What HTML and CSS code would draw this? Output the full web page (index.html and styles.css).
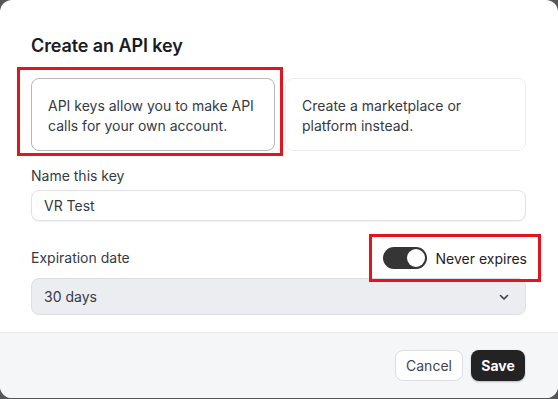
FILE: index.html
```html
<!DOCTYPE html>
<html lang="en">
<head>
    <meta charset="UTF-8">
    <meta name="viewport" content="width=device-width, initial-scale=1.0">
    <title>Create an API key</title>
    <link rel="stylesheet" href="styles.css">
</head>
<body>
    <div class="dialog">
        <div class="dialog-body">
            <h1>Create an API key</h1>

            <div class="key-types">
                <div class="key-type selected">
                    <p>API keys allow you to make API calls for your own account.</p>
                    <span class="mark mark-card"></span>
                </div>
                <div class="key-type">
                    <p>Create a marketplace or platform instead.</p>
                </div>
            </div>

            <label class="field-label" for="key-name">Name this key</label>
            <input class="text-input" type="text" id="key-name" value="VR Test">

            <div class="expiry-row">
                <span class="field-label">Expiration date</span>
                <div class="toggle-wrap">
                    <span class="toggle"><span class="knob"></span></span>
                    <span class="toggle-label">Never expires</span>
                    <span class="mark mark-toggle"></span>
                </div>
            </div>
            <div class="select-box">
                <span>30 days</span>
                <svg width="12" height="12" viewBox="0 0 12 12">
                    <path d="M2.5 4.5 L6 8 L9.5 4.5" fill="none" stroke="#353a44" stroke-width="1.6" stroke-linecap="round" stroke-linejoin="round"/>
                </svg>
            </div>
        </div>

        <div class="dialog-footer">
            <button class="btn btn-cancel">Cancel</button>
            <button class="btn btn-save">Save</button>
        </div>
    </div>
</body>
</html>
```

FILE: styles.css
```css
body {
    margin: 0;
    background-color: #555659;
    font-family: 'Inter', 'Liberation Sans', sans-serif;
    color: #353a44;
}

.dialog {
    width: 558px;
    height: 398px;
    background-color: white;
    border-radius: 12px;
    overflow: hidden;
    display: flex;
    flex-direction: column;
}

.dialog-body {
    flex: 1;
    padding: 34px 32px 0 31px;
}

h1 {
    margin: 0;
    font-size: 18px;
    line-height: 24px;
    font-weight: 600;
    color: #1a1b25;
    letter-spacing: -0.1px;
}

.key-types {
    display: grid;
    grid-template-columns: 244px 1fr;
    gap: 10px;
    margin-top: 20px;
}

.key-type {
    position: relative;
    height: 73px;
    box-sizing: border-box;
    border: 1px solid #ebedf0;
    border-radius: 8px;
    padding: 0 16px;
    display: flex;
    align-items: center;
}

.key-type.selected {
    border-color: #b3b7c0;
}

.key-type p {
    margin: 2px 0 0;
    font-size: 14px;
    line-height: 20px;
}

.mark {
    position: absolute;
    border: 3px solid #e3141b;
    pointer-events: none;
}

.mark-card {
    left: -15px;
    top: -12px;
    right: -9px;
    bottom: -6px;
}

.field-label {
    display: block;
    margin-top: 15px;
    font-size: 14px;
    line-height: 20px;
    color: #353a44;
}

.text-input {
    display: block;
    width: 100%;
    height: 31px;
    margin-top: 4px;
    padding: 0 12px;
    box-sizing: border-box;
    border: 1px solid #dfe1e6;
    border-radius: 8px;
    box-shadow: 0 1px 1px rgba(0,0,0,0.05);
    font-family: inherit;
    font-size: 14px;
    color: #353a44;
}

.expiry-row {
    display: flex;
    justify-content: space-between;
    align-items: center;
    margin-top: 26px;
    height: 22px;
}

.expiry-row .field-label {
    margin-top: 0;
}

.toggle-wrap {
    position: relative;
    display: flex;
    align-items: center;
    gap: 9px;
    margin-right: -1px;
}

.toggle {
    width: 44px;
    height: 22px;
    box-sizing: border-box;
    padding: 2px;
    border-radius: 11px;
    background-color: #353535;
    display: flex;
    justify-content: flex-end;
}

.knob {
    width: 18px;
    height: 18px;
    border-radius: 50%;
    background-color: white;
}

.toggle-label {
    font-size: 14px;
    color: #1f2128;
}

.mark-toggle {
    left: -14px;
    top: -13px;
    right: -14px;
    bottom: -13px;
}

.select-box {
    display: flex;
    justify-content: space-between;
    align-items: center;
    height: 37px;
    margin-top: 9px;
    padding: 0 15px 0 12px;
    box-sizing: border-box;
    background-color: #ebedf0;
    border: 1px solid #dcdee3;
    border-radius: 8px;
    font-size: 14px;
    color: #353a44;
}

.dialog-footer {
    height: 66px;
    box-sizing: border-box;
    border-top: 1px solid #e6e8eb;
    background-color: #f5f6f8;
    display: flex;
    justify-content: flex-end;
    align-items: center;
    gap: 8px;
    padding: 0 33px 1px 0;
}

.btn {
    height: 31px;
    border-radius: 8px;
    font-family: inherit;
    font-size: 14px;
    cursor: pointer;
}

.btn-cancel {
    width: 68px;
    background-color: white;
    border: 1px solid #dcdee3;
    color: #414552;
}

.btn-save {
    width: 54px;
    background-color: #232323;
    border: none;
    color: white;
    font-weight: 700;
    box-shadow: 0 1px 2px rgba(0,0,0,0.25);
}
```
